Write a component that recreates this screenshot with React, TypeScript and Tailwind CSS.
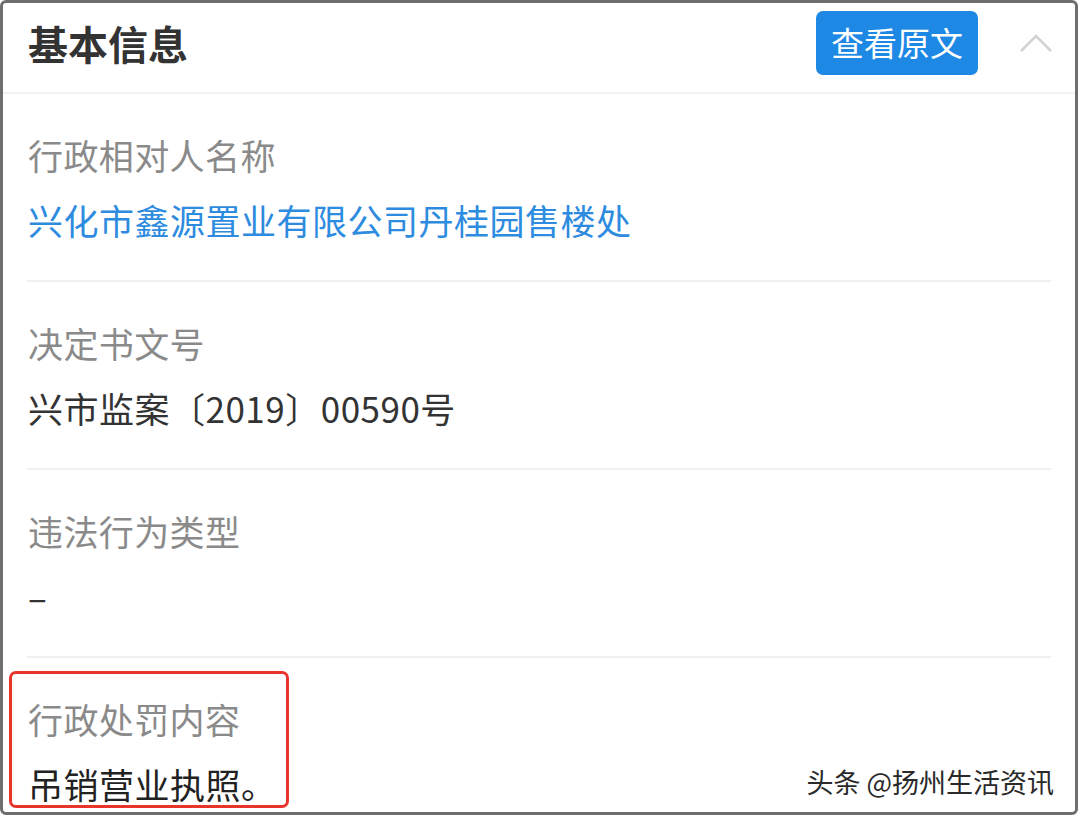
import React from 'react'

const font = { fontFamily: '"Noto Sans CJK SC", "Noto Sans", sans-serif' }

interface Row {
  label: string
  value: string
  blue?: boolean
}

const rows: Row[] = [
  { label: '行政相对人名称', value: '兴化市鑫源置业有限公司丹桂园售楼处', blue: true },
  { label: '决定书文号', value: '兴市监案〔2019〕00590号' },
  { label: '违法行为类型', value: '–' },
]

function Field({ label, value, blue }: Row) {
  return (
    <div className="pl-[25px] pt-[37px] pb-[36px]">
      <div className="text-[35px] leading-[48px] tracking-[0.4px] text-[#8a8a8a]">{label}</div>
      <div
        className={`mt-[17px] text-[35px] leading-[48px] tracking-[0.5px] ${blue ? 'text-[#2d8be0]' : 'text-[#333333]'}`}
      >
        {value}
      </div>
    </div>
  )
}

export default function App() {
  return (
    <div className="w-[1080px] h-[817px] bg-white" style={font}>
      <div className="relative w-[1078px] h-[815px] border-[3px] border-[#6e6e6e] rounded-[6px] bg-white overflow-hidden">
        {/* header */}
        <div className="flex items-center h-[91px] pb-[10px] pl-[25px] pr-[22px] border-b-2 border-[#f2f2f2]">
          <h1 className="flex-1 text-[40px] leading-none font-semibold text-[#333333]">基本信息</h1>
          <button className="w-[162px] h-[64px] rounded-[7px] bg-[#1e88e5] text-white text-[33px] leading-none">
            查看原文
          </button>
          <svg className="ml-[41px]" width="34" height="20" viewBox="0 0 34 20" fill="none">
            <path d="M2 18 L17 3 L32 18" stroke="#d2d2d2" strokeWidth="2.5" />
          </svg>
        </div>

        {rows.map((r) => (
          <div key={r.label}>
            <Field {...r} />
            <div className="mx-[24px] h-[2px] bg-[#f0f0f0]" />
          </div>
        ))}

        {/* last row, highlighted */}
        <div className="relative pl-[25px] pt-[37px]">
          <div className="text-[35px] leading-[48px] tracking-[0.4px] text-[#8a8a8a]">行政处罚内容</div>
          <div className="mt-[17px] text-[35px] leading-[48px] tracking-[0.5px] text-[#222222]">吊销营业执照。</div>
          <div className="absolute left-[6px] top-[13px] w-[280px] h-[137px] border-[3px] border-[#e8342b] rounded-[7px]" />
        </div>

        {/* watermark */}
        <div
          className="absolute right-[21px] bottom-[17px] text-[27px] leading-none text-[#2a2a2a]"
          style={{ textShadow: '1px 1px 0 #ffffff, -1px -1px 0 #ffffff, 1px -1px 0 #ffffff, -1px 1px 0 #ffffff' }}
        >
          头条 @扬州生活资讯
        </div>
      </div>
    </div>
  )
}
